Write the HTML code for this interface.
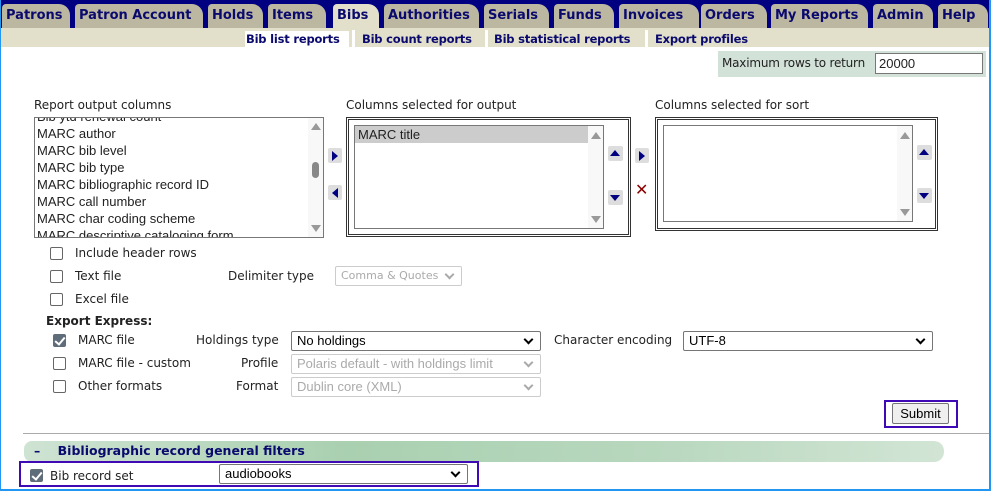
<!DOCTYPE html>
<html><head><meta charset="utf-8"><style>
*{box-sizing:border-box;margin:0;padding:0}
body{width:991px;height:491px;position:relative;overflow:hidden;background:#fff;font-family:"DejaVu Sans",Verdana,sans-serif;font-size:12px;color:#222}
.a{position:absolute;white-space:nowrap}
#frame{position:absolute;left:0;top:0;width:991px;height:491px;border:1px solid #2196f3;border-top:none;border-right:2px solid #2196f3;border-bottom:2px solid #2196f3;pointer-events:none;z-index:9}
#bar{position:absolute;left:0;top:0;width:991px;height:28px;background:#000080}
.tab{position:absolute;top:4px;height:24px;background:#bcb7a0;color:#0a0a6e;font-weight:bold;font-size:13px;line-height:24px;padding-left:4px;border-radius:4px 11px 0 0;white-space:nowrap;overflow:hidden}
.tab.on{background:#e2e0cb}
#sub{position:absolute;left:0;top:28px;width:991px;height:19px;background:#e2e0cb}
.sl{position:absolute;top:31px;height:16px;font-weight:bold;font-size:11.5px;letter-spacing:-0.2px;color:#0a0a6e;line-height:16px;padding:0 1px;white-space:nowrap}
.sep{position:absolute;top:30px;width:3px;height:17px;background:#fff}
.lb{position:absolute;border:1px solid #777;background:#fff;font-family:"Liberation Sans",Arial,sans-serif;font-size:13px;overflow:hidden}
.sb{position:absolute;right:0;top:0;bottom:0;width:15px;background:#f8f8f8}
.up,.dn{position:absolute;left:3px;width:0;height:0;border-left:5px solid transparent;border-right:5px solid transparent}
.up{border-bottom:7px solid #999}.dn{border-top:7px solid #999}
.btn{position:absolute;width:14px;height:15px;background:#ddd;border-radius:2px}
.cb{position:absolute;width:13px;height:13px;border:1px solid #666;border-radius:2px;background:#fff}
.cb.k{background:#5f6d7a;border-color:#5f6d7a}
.cb.k::after{content:"";position:absolute;left:3px;top:0px;width:4px;height:8px;border:solid #fff;border-width:0 2px 2px 0;transform:rotate(40deg)}
.sel{position:absolute;height:20px;border:1px solid #767676;border-radius:2px;background:#fff;font-family:"Liberation Sans",Arial,sans-serif;font-size:13px;line-height:18px;padding-left:5px;color:#000;white-space:nowrap;overflow:hidden}
.sel.d{border-color:#ccc;color:#aaa;background:#fff}
.sel::after{content:"";position:absolute;right:8px;top:4px;width:5px;height:5px;border:solid #000;border-width:0 2px 2px 0;transform:rotate(45deg)}
.sel.d::after{border-color:#aaa}
</style></head><body>
<div id="bar"></div>
<div class="tab" style="left:2px;width:68px">Patrons</div>
<div class="tab" style="left:75px;width:128px">Patron Account</div>
<div class="tab" style="left:208px;width:55px">Holds</div>
<div class="tab" style="left:268px;width:58px">Items</div>
<div class="tab on" style="left:333px;width:46px">Bibs</div>
<div class="tab" style="left:384px;width:95px">Authorities</div>
<div class="tab" style="left:484px;width:65px">Serials</div>
<div class="tab" style="left:554px;width:60px">Funds</div>
<div class="tab" style="left:619px;width:80px">Invoices</div>
<div class="tab" style="left:701px;width:66px">Orders</div>
<div class="tab" style="left:771px;width:97px">My Reports</div>
<div class="tab" style="left:873px;width:60px">Admin</div>
<div class="tab" style="left:938px;width:50px">Help</div>
<div id="sub"></div>
<div class="sl" style="left:245px;width:104px;background:#fff">Bib list reports</div>
<div class="sep" style="left:352px"></div>
<div class="sl" style="left:361px">Bib count reports</div>
<div class="sep" style="left:485px"></div>
<div class="sl" style="left:493px">Bib statistical reports</div>
<div class="sep" style="left:645px"></div>
<div class="sl" style="left:654px">Export profiles</div>

<div class="a" style="left:718px;top:51px;width:268px;height:26px;background:#d3e2d8"></div>
<div class="a" style="left:722px;top:56px;font-size:12px;letter-spacing:-0.2px">Maximum rows to return</div>
<div class="a" style="left:875px;top:53px;width:108px;height:21px;border:1px solid #777;background:#fff;font-family:'Liberation Sans',Arial,sans-serif;font-size:13px;line-height:19px;padding-left:3px">20000</div>

<div class="a" style="left:34px;top:98px">Report output columns</div>
<div class="a" style="left:346px;top:98px">Columns selected for output</div>
<div class="a" style="left:655px;top:98px">Columns selected for sort</div>

<div class="lb" style="left:34px;top:117px;width:290px;height:121px">
 <div style="position:absolute;left:2px;top:-10px;line-height:17px">Bib ytd renewal count<br>MARC author<br>MARC bib level<br>MARC bib type<br>MARC bibliographic record ID<br>MARC call number<br>MARC char coding scheme<br>MARC descriptive cataloging form</div>
 <div class="sb"><div class="up" style="top:5px"></div><div style="position:absolute;left:4px;top:44px;width:7px;height:16px;background:#888;border-radius:4px"></div><div class="dn" style="bottom:5px"></div></div>
</div>
<div class="btn" style="left:328px;top:148px"><div style="position:absolute;left:4px;top:3px;border-top:5px solid transparent;border-bottom:5px solid transparent;border-left:6px solid #000080"></div></div>
<div class="btn" style="left:328px;top:185px"><div style="position:absolute;left:4px;top:3px;border-top:5px solid transparent;border-bottom:5px solid transparent;border-right:6px solid #000080"></div></div>

<div class="a" style="left:346px;top:117px;width:285px;height:120px;border:3px double #333"></div>
<div class="lb" style="left:354px;top:125px;width:250px;height:104px">
 <div style="position:absolute;left:0;top:0;width:234px;height:17px;background:#ccc;padding-left:3px;line-height:17px">MARC title</div>
 <div class="sb"><div class="up" style="top:6px"></div><div class="dn" style="bottom:5px"></div></div>
</div>
<div class="btn" style="left:608px;top:146px;width:15px"><div style="position:absolute;left:2px;top:4px;border-left:5px solid transparent;border-right:5px solid transparent;border-bottom:6px solid #000080"></div></div>
<div class="btn" style="left:608px;top:190px;width:15px"><div style="position:absolute;left:2px;top:5px;border-left:5px solid transparent;border-right:5px solid transparent;border-top:6px solid #000080"></div></div>
<div class="btn" style="left:635px;top:148px"><div style="position:absolute;left:4px;top:3px;border-top:5px solid transparent;border-bottom:5px solid transparent;border-left:6px solid #000080"></div></div>
<div class="a" style="left:635px;top:180px;color:#8b0000;font-size:16px;font-family:'Liberation Sans',sans-serif">✕</div>

<div class="a" style="left:655px;top:117px;width:283px;height:114px;border:3px double #333"></div>
<div class="lb" style="left:663px;top:125px;width:250px;height:97px">
 <div class="sb"><div class="up" style="top:6px"></div><div class="dn" style="bottom:5px"></div></div>
</div>
<div class="btn" style="left:917px;top:145px;width:15px"><div style="position:absolute;left:2px;top:4px;border-left:5px solid transparent;border-right:5px solid transparent;border-bottom:6px solid #000080"></div></div>
<div class="btn" style="left:917px;top:188px;width:15px"><div style="position:absolute;left:2px;top:5px;border-left:5px solid transparent;border-right:5px solid transparent;border-top:6px solid #000080"></div></div>

<div class="cb" style="left:50px;top:247px"></div><div class="a" style="left:75px;top:246px">Include header rows</div>
<div class="cb" style="left:50px;top:270px"></div><div class="a" style="left:75px;top:269px">Text file</div>
<div class="a" style="left:228px;top:269px">Delimiter type</div>
<div class="sel d" style="left:335px;top:266px;width:127px;font-family:'DejaVu Sans',sans-serif;font-size:11px">Comma &amp; Quotes</div>
<div class="cb" style="left:50px;top:293px"></div><div class="a" style="left:75px;top:292px">Excel file</div>

<div class="a" style="left:46px;top:314px;font-weight:bold">Export Express:</div>
<div class="cb k" style="left:53px;top:334px"></div><div class="a" style="left:78px;top:333px">MARC file</div>
<div class="a" style="left:196px;top:333px">Holdings type</div>
<div class="sel" style="left:291px;top:331px;width:250px">No holdings</div>
<div class="a" style="left:554px;top:333px">Character encoding</div>
<div class="sel" style="left:683px;top:331px;width:250px">UTF-8</div>
<div class="cb" style="left:53px;top:357px"></div><div class="a" style="left:78px;top:356px">MARC file - custom</div>
<div class="a" style="left:241px;top:356px">Profile</div>
<div class="sel d" style="left:291px;top:354px;width:250px">Polaris default - with holdings limit</div>
<div class="cb" style="left:53px;top:380px"></div><div class="a" style="left:78px;top:379px">Other formats</div>
<div class="a" style="left:236px;top:379px">Format</div>
<div class="sel d" style="left:291px;top:377px;width:250px">Dublin core (XML)</div>

<div class="a" style="left:884px;top:400px;width:74px;height:28px;border:2px solid #3f0ab5"></div>
<div class="a" style="left:892px;top:403px;width:57px;height:21px;background:#efefef;border:1px solid #767676;border-radius:2px;font-family:'Liberation Sans',Arial,sans-serif;font-size:13px;line-height:19px;text-align:center;color:#000">Submit</div>
<div class="a" style="left:23px;top:433px;width:966px;height:1px;background:#aaa"></div>
<div class="a" style="left:24px;top:441px;width:920px;height:21px;border-radius:8px 10px 10px 8px;background:linear-gradient(90deg,#cfe3d3,#a9d0b0 35%,#b9d8bf 70%,#d2e5d5)"></div>
<div class="a" style="left:34px;top:443px;font-weight:bold;color:#0a0a6e;font-size:12.5px">–&nbsp;&nbsp;&nbsp;&nbsp;Bibliographic record general filters</div>
<div class="a" style="left:19px;top:461px;width:460px;height:26px;border:2px solid #3f0ab5"></div>
<div class="cb k" style="left:30px;top:469px"></div>
<div class="a" style="left:50px;top:469px">Bib record set</div>
<div class="sel" style="left:219px;top:464px;width:249px">audiobooks</div>
<div id="frame"></div>
</body></html>
